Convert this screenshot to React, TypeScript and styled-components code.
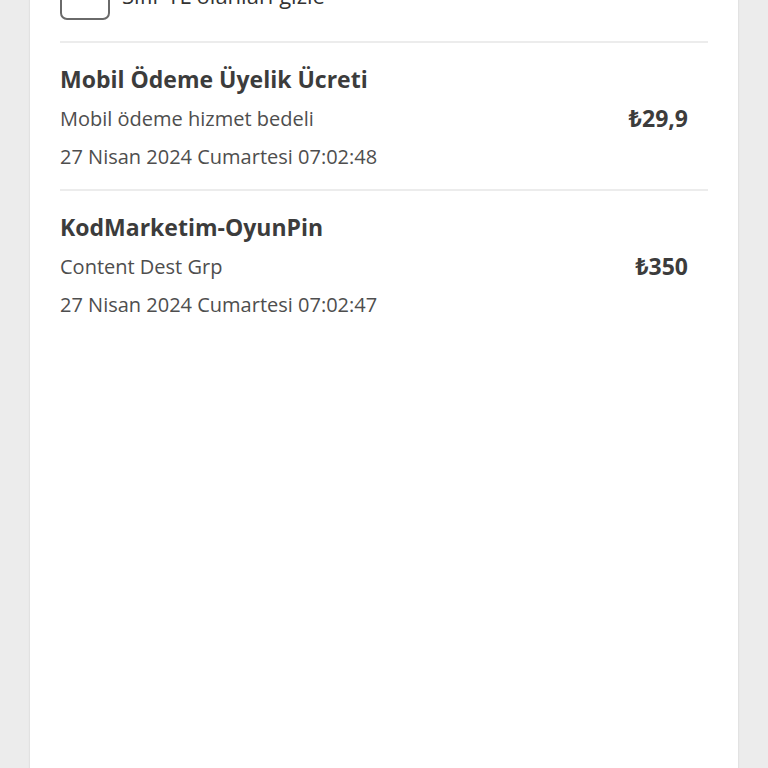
import styled, { createGlobalStyle } from 'styled-components';

const GlobalStyle = createGlobalStyle`
  * {
    margin: 0;
    padding: 0;
    box-sizing: border-box;
  }

  html, body {
    height: 100%;
    overflow: hidden;
  }

  body {
    font-family: 'Open Sans', 'Noto Sans', sans-serif;
    background-color: #ececec;
    color: #3c3c3c;
  }
`;

// the list card continues above and below the visible part
const Card = styled.div`
  margin: 0 30px;
  min-height: calc(100vh + 60px);
  background: #ffffff;
  padding: 0 30px;
  box-shadow: 0 0 2px rgba(0, 0, 0, 0.12);
`;

const FilterRow = styled.label`
  display: flex;
  align-items: center;
  gap: 12px;
  margin-top: -30px;
  padding-bottom: 21px;
  border-bottom: 2px solid #ececec;
`;

const Checkbox = styled.span`
  width: 50px;
  height: 50px;
  border: 2px solid #6a6a6a;
  border-radius: 7px;
  background: #fff;
  flex-shrink: 0;
`;

const FilterText = styled.span`
  font-size: 22px;
  color: #333;
`;

const Item = styled.div<{ $last?: boolean }>`
  display: flex;
  align-items: center;
  justify-content: space-between;
  padding: 21px 20px 17px 0;
  border-bottom: ${props => (props.$last ? 'none' : '2px solid #ececec')};
`;

const Info = styled.div`
  display: flex;
  flex-direction: column;
`;

const Title = styled.div`
  font-size: 23px;
  font-weight: 700;
  line-height: 30px;
  color: #3c3c3c;
`;

const Detail = styled.div<{ $gap: number }>`
  font-size: 20px;
  line-height: 30px;
  margin-top: ${props => props.$gap}px;
  color: #4e4e4e;
`;

const Price = styled.div`
  font-size: 23px;
  font-weight: 700;
  color: #3c3c3c;
`;

const items = [
  {
    title: 'Mobil Ödeme Üyelik Ücreti',
    detail: 'Mobil ödeme hizmet bedeli',
    date: '27 Nisan 2024 Cumartesi 07:02:48',
    price: '₺29,9',
  },
  {
    title: 'KodMarketim-OyunPin',
    detail: 'Content Dest Grp',
    date: '27 Nisan 2024 Cumartesi 07:02:47',
    price: '₺350',
  },
];

export default function App() {
  return (
    <>
      <GlobalStyle />
      <Card>
        <FilterRow>
          <Checkbox />
          <FilterText>Sıfır TL olanları gizle</FilterText>
        </FilterRow>
        {items.map((item, i) => (
          <Item key={item.date} $last={i === items.length - 1}>
            <Info>
              <Title>{item.title}</Title>
              <Detail $gap={10}>{item.detail}</Detail>
              <Detail $gap={8}>{item.date}</Detail>
            </Info>
            <Price>{item.price}</Price>
          </Item>
        ))}
      </Card>
    </>
  );
}
